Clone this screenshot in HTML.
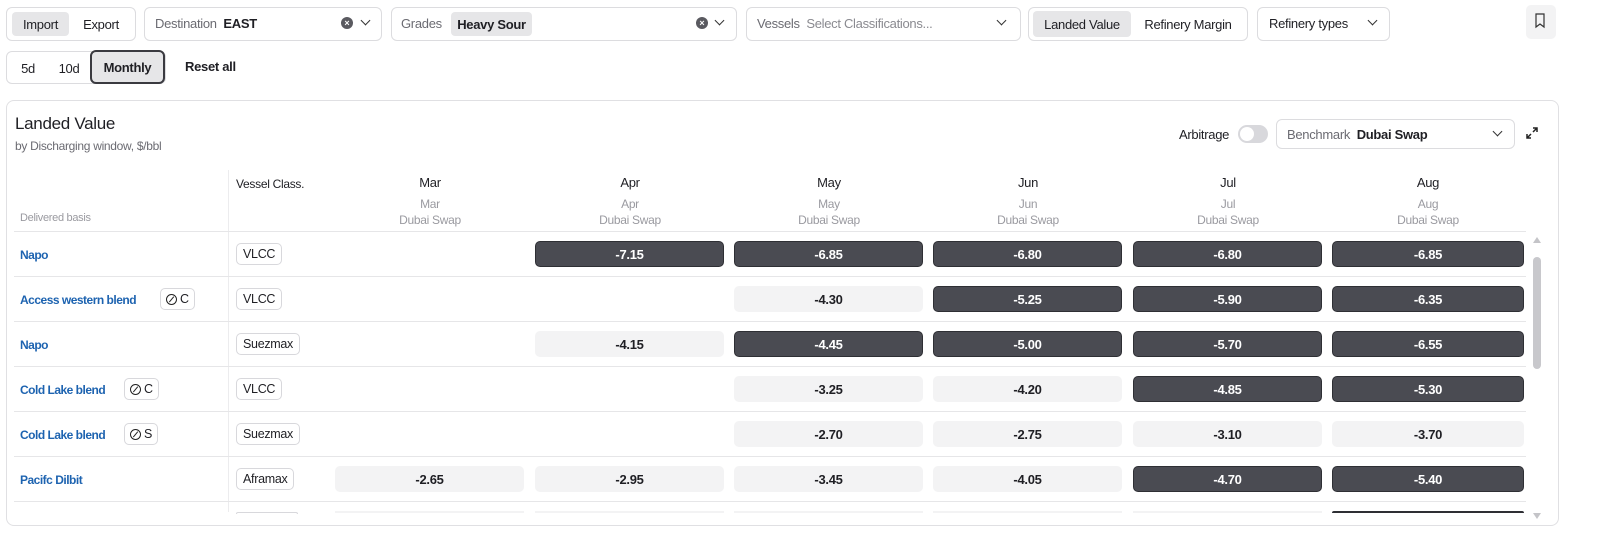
<!DOCTYPE html>
<html><head><style>
*{box-sizing:border-box;margin:0;padding:0}
body{width:1600px;height:540px;background:#fff;font-family:"Liberation Sans",sans-serif;font-size:13px;color:#1f1f24;position:relative;overflow:hidden;letter-spacing:-0.3px}
.a{position:absolute}
.box{position:absolute;border:1px solid #dcdcdf;border-radius:6px;background:#fff}
.seg{position:absolute;border-radius:4px;display:flex;align-items:center;justify-content:center}
.lbl{color:#6b6b72}
.chev{position:absolute;width:7px;height:7px;border-right:1.5px solid #333;border-bottom:1.5px solid #333;transform:rotate(45deg)}
.x{position:absolute;width:12px;height:12px;border-radius:50%;background:#5a5a60;color:#fff;font-size:9px;line-height:12px;text-align:center;font-weight:bold;letter-spacing:0}
.cell{position:absolute;height:26px;border-radius:5px;display:flex;align-items:center;justify-content:center;font-weight:bold;font-size:13px}
.d{background:#4a4b52;color:#fff;border:1px solid #2e2f34}
.l{background:#f3f3f4;color:#1f1f24}
.tag{position:absolute;height:22px;border:1px solid #d8d8dc;border-radius:5px;padding:0 6px;display:flex;align-items:center;font-size:12.5px}
.name{position:absolute;left:20px;color:#1d63b0;font-weight:bold;font-size:12px;letter-spacing:-0.5px}
.hl{position:absolute;left:14px;width:1512px;height:1px;background:#e6e6e8}
.mh{position:absolute;text-align:center;width:190px;font-size:13px}
.ms{position:absolute;text-align:center;width:190px;font-size:12px;color:#9a9aa0;line-height:16px}
.ic{display:inline-block;width:11px;height:11px;border:1.3px solid #222;border-radius:50%;position:relative;margin-right:3px;vertical-align:-1px}
.ic:after{content:"";position:absolute;left:4px;top:1px;width:1.3px;height:7px;background:#222;transform:rotate(40deg)}
</style></head><body>
<div class="box" style="left:6px;top:7px;width:130px;height:34px"></div>
<div class="seg" style="left:12px;top:12px;width:57px;height:24px;background:#e6e6e8">Import</div>
<div class="seg" style="left:72px;top:12px;width:58px;height:24px">Export</div>
<div class="box" style="left:144px;top:7px;width:238px;height:34px"></div>
<div class="a" style="left:155px;top:16px"><span class="lbl">Destination</span>&nbsp; <b>EAST</b></div>
<div class="x" style="left:341px;top:17px">×</div><div class="chev" style="left:362px;top:17px"></div>
<div class="box" style="left:391px;top:7px;width:346px;height:34px"></div>
<div class="a" style="left:401px;top:16px"><span class="lbl">Grades</span></div>
<div class="seg" style="left:451px;top:12px;width:81px;height:24px;background:#e6e6e8;font-weight:bold">Heavy Sour</div>
<div class="x" style="left:696px;top:17px">×</div><div class="chev" style="left:716px;top:17px"></div>
<div class="box" style="left:746px;top:7px;width:275px;height:34px"></div>
<div class="a" style="left:757px;top:16px"><span class="lbl">Vessels</span>&nbsp; <span style="color:#8a8a90">Select Classifications...</span></div>
<div class="chev" style="left:998px;top:17px"></div>
<div class="box" style="left:1028px;top:7px;width:220px;height:34px"></div>
<div class="seg" style="left:1033px;top:11px;width:98px;height:26px;background:#e6e6e8">Landed Value</div>
<div class="seg" style="left:1134px;top:11px;width:108px;height:26px">Refinery Margin</div>
<div class="box" style="left:1257px;top:7px;width:133px;height:34px"></div>
<div class="a" style="left:1269px;top:16px">Refinery types</div><div class="chev" style="left:1369px;top:17px"></div>
<div class="a" style="left:1526px;top:5px;width:30px;height:34px;background:#f3f3f4;border-radius:5px"></div>
<svg class="a" style="left:1534px;top:13px" width="12" height="16" viewBox="0 0 12 16"><path d="M2 1h8v13l-4-3-4 3z" fill="none" stroke="#333" stroke-width="1.2"/></svg>
<div class="box" style="left:6px;top:51px;width:160px;height:33px"></div>
<div class="seg" style="left:12px;top:56px;width:32px;height:24px">5d</div>
<div class="seg" style="left:50px;top:56px;width:38px;height:24px">10d</div>
<div class="seg" style="left:90px;top:50px;width:75px;height:34px;background:#e6e6e8;border:2px solid #3a3a40;border-radius:6px;font-weight:bold">Monthly</div>
<div class="a" style="left:185px;top:59px;font-weight:bold">Reset all</div>
<div class="box" style="left:6px;top:100px;width:1553px;height:426px;border-radius:8px;border-color:#e0e0e3"></div>
<div class="a" style="left:15px;top:114px;font-size:17px">Landed Value</div>
<div class="a" style="left:15px;top:139px;font-size:12px;color:#6b6b72">by Discharging window, $/bbl</div>
<div class="a" style="left:1179px;top:127px">Arbitrage</div>
<div class="a" style="left:1238px;top:125px;width:30px;height:18px;border-radius:9px;background:#d8d8dc"><div style="position:absolute;left:2px;top:2px;width:14px;height:14px;border-radius:50%;background:#fff"></div></div>
<div class="box" style="left:1276px;top:119px;width:239px;height:30px"></div>
<div class="a" style="left:1287px;top:127px"><span class="lbl">Benchmark</span>&nbsp; <b>Dubai Swap</b></div>
<div class="chev" style="left:1494px;top:128px"></div>
<svg class="a" style="left:1526px;top:127px" width="12" height="12" viewBox="0 0 12 12"><path d="M7 1h4v4M11 1L7 5M5 11H1V7M1 11l4-4" fill="none" stroke="#222" stroke-width="1.5"/></svg>
<div class="a" style="left:228px;top:170px;width:1px;height:342px;background:#ececee"></div>
<div class="a" style="left:20px;top:212px;font-size:11px;color:#9a9aa0">Delivered basis</div>
<div class="a" style="left:236px;top:177px;font-size:12px">Vessel Class.</div>
<div class="mh" style="left:335px;top:175px">Mar</div><div class="ms" style="left:335px;top:196px">Mar<br>Dubai Swap</div>
<div class="mh" style="left:535px;top:175px">Apr</div><div class="ms" style="left:535px;top:196px">Apr<br>Dubai Swap</div>
<div class="mh" style="left:734px;top:175px">May</div><div class="ms" style="left:734px;top:196px">May<br>Dubai Swap</div>
<div class="mh" style="left:933px;top:175px">Jun</div><div class="ms" style="left:933px;top:196px">Jun<br>Dubai Swap</div>
<div class="mh" style="left:1133px;top:175px">Jul</div><div class="ms" style="left:1133px;top:196px">Jul<br>Dubai Swap</div>
<div class="mh" style="left:1333px;top:175px">Aug</div><div class="ms" style="left:1333px;top:196px">Aug<br>Dubai Swap</div>
<div class="hl" style="top:231px"></div><div class="hl" style="top:276px"></div><div class="hl" style="top:321px"></div><div class="hl" style="top:366px"></div><div class="hl" style="top:411px"></div><div class="hl" style="top:456px"></div><div class="hl" style="top:501px"></div>
<div class="name" style="top:248px">Napo</div><div class="tag" style="left:236px;top:243px">VLCC</div>
<div class="name" style="top:293px">Access western blend</div><div class="tag" style="left:160px;top:288px;padding:0 5px"><span class="ic"></span>C</div><div class="tag" style="left:236px;top:288px">VLCC</div>
<div class="name" style="top:338px">Napo</div><div class="tag" style="left:236px;top:333px">Suezmax</div>
<div class="name" style="top:383px">Cold Lake blend</div><div class="tag" style="left:124px;top:378px;padding:0 5px"><span class="ic"></span>C</div><div class="tag" style="left:236px;top:378px">VLCC</div>
<div class="name" style="top:428px">Cold Lake blend</div><div class="tag" style="left:124px;top:423px;padding:0 5px"><span class="ic"></span>S</div><div class="tag" style="left:236px;top:423px">Suezmax</div>
<div class="name" style="top:473px">Pacifc Dilbit</div><div class="tag" style="left:236px;top:468px">Aframax</div>

<div class="cell d" style="left:535px;top:241px;width:189px">-7.15</div>
<div class="cell d" style="left:734px;top:241px;width:189px">-6.85</div>
<div class="cell d" style="left:933px;top:241px;width:189px">-6.80</div>
<div class="cell d" style="left:1133px;top:241px;width:189px">-6.80</div>
<div class="cell d" style="left:1332px;top:241px;width:192px">-6.85</div>

<div class="cell l" style="left:734px;top:286px;width:189px">-4.30</div>
<div class="cell d" style="left:933px;top:286px;width:189px">-5.25</div>
<div class="cell d" style="left:1133px;top:286px;width:189px">-5.90</div>
<div class="cell d" style="left:1332px;top:286px;width:192px">-6.35</div>

<div class="cell l" style="left:535px;top:331px;width:189px">-4.15</div>
<div class="cell d" style="left:734px;top:331px;width:189px">-4.45</div>
<div class="cell d" style="left:933px;top:331px;width:189px">-5.00</div>
<div class="cell d" style="left:1133px;top:331px;width:189px">-5.70</div>
<div class="cell d" style="left:1332px;top:331px;width:192px">-6.55</div>

<div class="cell l" style="left:734px;top:376px;width:189px">-3.25</div>
<div class="cell l" style="left:933px;top:376px;width:189px">-4.20</div>
<div class="cell d" style="left:1133px;top:376px;width:189px">-4.85</div>
<div class="cell d" style="left:1332px;top:376px;width:192px">-5.30</div>

<div class="cell l" style="left:734px;top:421px;width:189px">-2.70</div>
<div class="cell l" style="left:933px;top:421px;width:189px">-2.75</div>
<div class="cell l" style="left:1133px;top:421px;width:189px">-3.10</div>
<div class="cell l" style="left:1332px;top:421px;width:192px">-3.70</div>

<div class="cell l" style="left:335px;top:466px;width:189px">-2.65</div>
<div class="cell l" style="left:535px;top:466px;width:189px">-2.95</div>
<div class="cell l" style="left:734px;top:466px;width:189px">-3.45</div>
<div class="cell l" style="left:933px;top:466px;width:189px">-4.05</div>
<div class="cell d" style="left:1133px;top:466px;width:189px">-4.70</div>
<div class="cell d" style="left:1332px;top:466px;width:192px">-5.40</div>

<div class="a" style="left:236px;top:512px;width:62px;height:2px;border:1px solid #d8d8dc;border-bottom:none;border-radius:5px 5px 0 0"></div>
<div class="a" style="left:335px;top:511px;width:189px;height:2px;background:#f3f3f4"></div>
<div class="a" style="left:535px;top:511px;width:189px;height:2px;background:#f3f3f4"></div>
<div class="a" style="left:734px;top:511px;width:189px;height:2px;background:#f3f3f4"></div>
<div class="a" style="left:933px;top:511px;width:189px;height:2px;background:#f3f3f4"></div>
<div class="a" style="left:1133px;top:511px;width:189px;height:2px;background:#f3f3f4"></div>
<div class="a" style="left:1332px;top:511px;width:192px;height:2px;background:#2e2f34;border-radius:5px 5px 0 0"></div>
<svg class="a" style="left:1532px;top:236px" width="10" height="8"><path d="M1 7L5 1 9 7z" fill="#c4c4c8"/></svg>
<div class="a" style="left:1533px;top:257px;width:8px;height:112px;border-radius:4px;background:#c8c8cc"></div>
<svg class="a" style="left:1532px;top:512px" width="10" height="8"><path d="M1 1L5 7 9 1z" fill="#c4c4c8"/></svg>
</body></html>
